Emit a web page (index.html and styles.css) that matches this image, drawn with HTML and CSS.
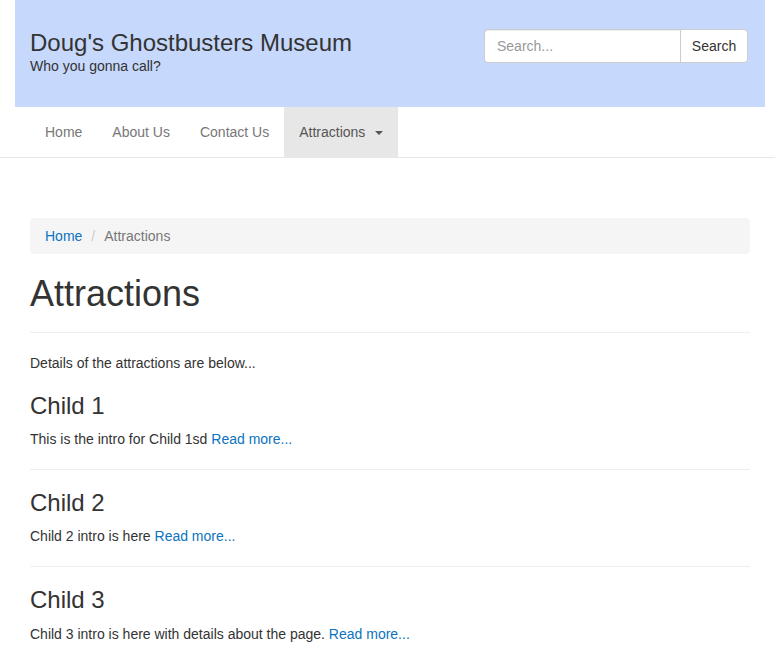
FILE: index.html
```html
<!DOCTYPE html>
<html>
<head>
<meta charset="utf-8">
<title>Doug's Ghostbusters Museum</title>
<link rel="stylesheet" href="styles.css">
</head>
<body>
<header class="site-header">
  <div class="brand">
    <div class="brand-title">Doug's Ghostbusters Museum</div>
    <div class="brand-tagline">Who you gonna call?</div>
  </div>
  <form class="search">
    <input class="search-input" type="text" placeholder="Search...">
    <button class="search-btn" type="button">Search</button>
  </form>
</header>
<nav class="navbar">
  <ul class="nav">
    <li><a href="#">Home</a></li>
    <li><a href="#">About Us</a></li>
    <li><a href="#">Contact Us</a></li>
    <li class="active"><a href="#">Attractions <span class="caret"></span></a></li>
  </ul>
</nav>
<main class="content">
  <ol class="breadcrumb">
    <li><a href="#">Home</a></li>
    <li class="current">Attractions</li>
  </ol>
  <div class="page-header"><h1>Attractions</h1></div>
  <p>Details of the attractions are below...</p>
  <h3>Child 1</h3>
  <p>This is the intro for Child 1sd <a href="#">Read more...</a></p>
  <hr>
  <h3>Child 2</h3>
  <p>Child 2 intro is here <a href="#">Read more...</a></p>
  <hr>
  <h3>Child 3</h3>
  <p>Child 3 intro is here with details about the page. <a href="#">Read more...</a></p>
</main>
</body>
</html>
```
FILE: styles.css
```css
* { box-sizing: border-box; }
html, body { margin: 0; padding: 0; }
body {
  font-family: "Liberation Sans", Arial, Helvetica, sans-serif;
  font-size: 14px;
  line-height: 1.42857143;
  color: #333;
  background: #fff;
}
a { color: #0c73c0; text-decoration: none; }

.site-header {
  margin: 0 10px 0 15px;
  height: 107px;
  background: #c6d8fb;
  display: flex;
  justify-content: space-between;
  align-items: flex-start;
  padding: 0 17px 0 15px;
}
.brand { padding-top: 30px; }
.brand-title {
  font-size: 24px;
  line-height: 1.1;
  color: #333;
}
.brand-tagline { font-size: 14px; line-height: 20px; }

.search {
  margin-top: 29px;
  display: flex;
}
.search-input {
  width: 196px;
  height: 34px;
  padding: 6px 12px;
  font: inherit;
  font-size: 14px;
  color: #555;
  border: 1px solid #ccc;
  border-right: 0;
  border-radius: 4px 0 0 4px;
  background: #fff;
  box-shadow: inset 0 1px 1px rgba(0,0,0,.075);
  outline: none;
}
.search-input::placeholder { color: #999; }
.search-btn {
  height: 34px;
  width: 68px;
  padding: 6px 10px;
  font: inherit;
  font-size: 14px;
  color: #333;
  background: #fff;
  border: 1px solid #ccc;
  border-radius: 0 4px 4px 0;
}

.navbar {
  border-bottom: 1px solid #e7e7e7;
  padding-left: 30px;
}
.nav {
  list-style: none;
  margin: 0;
  padding: 0;
  display: flex;
}
.nav a {
  display: block;
  padding: 15px;
  line-height: 20px;
  color: #777;
}
.nav .active a { background: #e7e7e7; color: #555; }
.caret {
  display: inline-block;
  width: 0;
  height: 0;
  margin-left: 6px;
  vertical-align: middle;
  border-top: 4px solid;
  border-left: 4px solid transparent;
  border-right: 4px solid transparent;
}

.content {
  padding: 60px 25px 20px 30px;
}
.breadcrumb {
  list-style: none;
  margin: 0 0 20px;
  padding: 8px 15px;
  background: #f5f5f5;
  border-radius: 4px;
  display: flex;
}
.breadcrumb .current { color: #777; }
.breadcrumb li + li::before {
  content: "/";
  padding: 0 5px;
  color: #ccc;
  margin-left: 4px;
  margin-right: 4px;
}
.page-header {
  padding-bottom: 8px;
  margin: 20px 0 20px;
  border-bottom: 1px solid #eee;
}
h1 {
  font-size: 36px;
  font-weight: 500;
  line-height: 1.1;
  margin: 0 0 10px;
}
h3 {
  font-size: 24px;
  font-weight: 500;
  line-height: 1.1;
  margin: 20px 0 10px;
}
p { margin: 0 0 10px; }
hr {
  margin: 20px 0;
  border: 0;
  border-top: 1px solid #eee;
}
```
